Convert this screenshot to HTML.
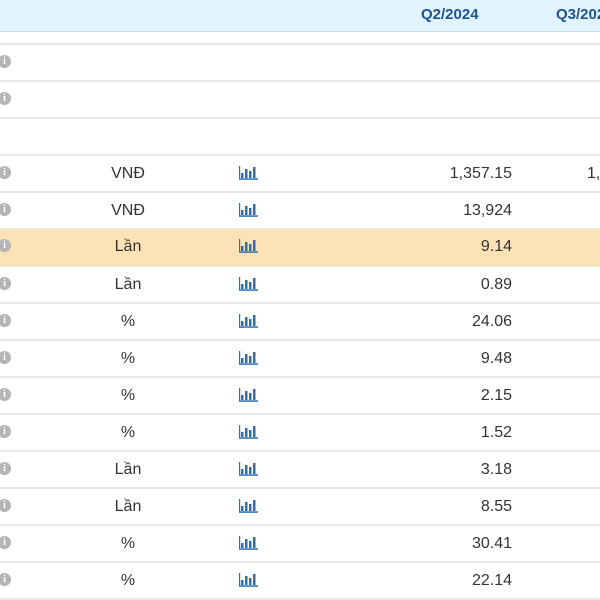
<!DOCTYPE html><html><head><style>
body{margin:0;width:600px;height:600px;overflow:hidden;background:#fff;font-family:"Liberation Sans",sans-serif;position:relative}
.hd{position:absolute;left:0;top:0;width:600px;height:31px;background:#e1f3fd;border-bottom:1px solid #cfdbe5}
.hd span{position:absolute;top:6px;font-weight:bold;font-size:15px;color:#1b5394}
.ln{position:absolute;left:0;width:600px;height:2px;background:#e8e8e8}
.r{position:absolute;left:0;width:600px;height:35px;font-size:16px;color:#333}
.r .i{position:absolute;left:-2px;top:10px;width:13px;height:13px;border-radius:50%;background:#b5b5b5;color:#fff;font-size:10px;font-weight:bold;text-align:center;line-height:13px;font-family:"Liberation Serif",serif}
.r .u{position:absolute;left:78px;width:100px;text-align:center;top:9px}
.r .c{position:absolute;left:239px;top:10px}
.r .v{position:absolute;right:88px;top:9px}
.r .w{position:absolute;left:587px;top:9px}
</style></head><body>
<div class="hd"><span style="left:421px">Q2/2024</span><span style="left:556px">Q3/2024</span></div>
<div class="ln" style="top:43px"></div>
<div class="ln" style="top:80px"></div>
<div class="ln" style="top:117px"></div>
<div class="ln" style="top:154px"></div>
<div class="ln" style="top:191px"></div>
<div class="ln" style="top:228px"></div>
<div class="ln" style="top:265px"></div>
<div class="ln" style="top:302px"></div>
<div class="ln" style="top:339px"></div>
<div class="ln" style="top:376px"></div>
<div class="ln" style="top:413px"></div>
<div class="ln" style="top:450px"></div>
<div class="ln" style="top:487px"></div>
<div class="ln" style="top:524px"></div>
<div class="ln" style="top:561px"></div>
<div class="ln" style="top:598px"></div>
<div class="r" style="top:45px"><div class="i">i</div></div>
<div class="r" style="top:82px"><div class="i">i</div></div>
<div id="rows"></div>
<script>
var d=[["VNĐ","1,357.15","1,4"],["VNĐ","13,924"],["Lần","9.14"],["Lần","0.89"],["%","24.06"],["%","9.48"],["%","2.15"],["%","1.52"],["Lần","3.18"],["Lần","8.55"],["%","30.41"],["%","22.14"]];
var ic='<svg width="19" height="14" viewBox="0 0 19 14"><g fill="#2f6db5"><rect x="2" y="7" width="2.5" height="5"/><rect x="6" y="3" width="2.5" height="9"/><rect x="10" y="5" width="2.5" height="7"/><rect x="14" y="1" width="2.5" height="11"/><rect x="0" y="0" width="1.2" height="13"/><rect x="0" y="12.3" width="19" height="1.5"/></g></svg>';
var h='';d.forEach(function(r,k){var t=156+37*k;h+='<div class="r" style="top:'+t+'px;'+(k==2?'background:#fde2b6;top:'+(t-1)+'px;height:37px;':'')+'"><div class="i">i</div><div class="u">'+r[0]+'</div><div class="c">'+ic+'</div><div class="v">'+r[1]+'</div>'+(r[2]?'<div class="w">'+r[2]+'</div>':'')+'</div>';});
document.getElementById('rows').innerHTML=h;
</script>
</body></html>
